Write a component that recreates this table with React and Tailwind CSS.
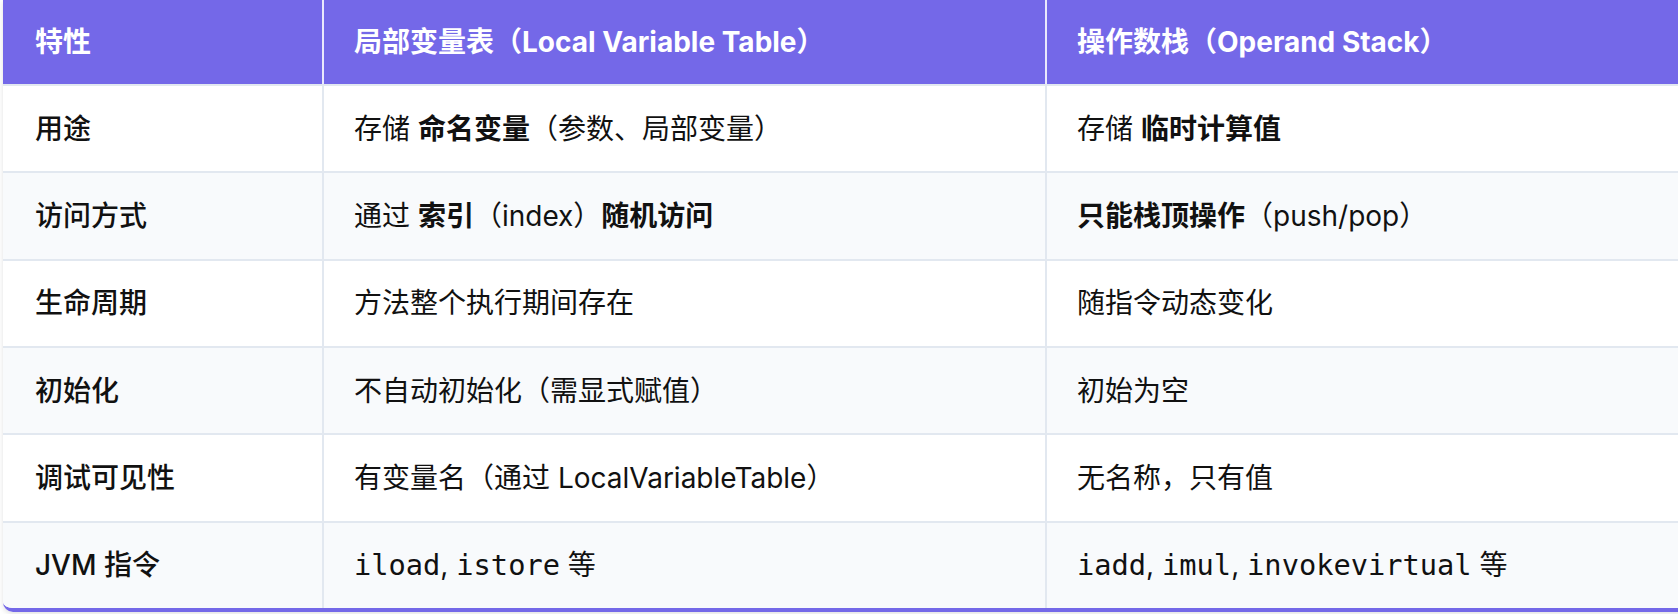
const rows = [
  {
    name: '用途',
    local: (
      <>
        存储 <b className="font-bold">命名变量</b>（参数、局部变量）
      </>
    ),
    stack: (
      <>
        存储 <b className="font-bold">临时计算值</b>
      </>
    ),
  },
  {
    name: '访问方式',
    local: (
      <>
        通过 <b className="font-bold">索引</b>（index）<b className="font-bold">随机访问</b>
      </>
    ),
    stack: (
      <>
        <b className="font-bold">只能栈顶操作</b>（push/pop）
      </>
    ),
  },
  { name: '生命周期', local: '方法整个执行期间存在', stack: '随指令动态变化' },
  { name: '初始化', local: '不自动初始化（需显式赋值）', stack: '初始为空' },
  { name: '调试可见性', local: '有变量名（通过 LocalVariableTable）', stack: '无名称，只有值' },
  {
    name: 'JVM 指令',
    local: (
      <>
        <Code>iload</Code>, <Code>istore</Code> 等
      </>
    ),
    stack: (
      <>
        <Code>iadd</Code>, <Code>imul</Code>, <Code>invokevirtual</Code> 等
      </>
    ),
  },
];

function Code({ children }) {
  return <code className="font-['DejaVu_Sans_Mono',monospace] text-[28.7px]">{children}</code>;
}

const App = () => {
  return (
    <div className="w-full h-[614px] overflow-hidden bg-white pl-[3px] font-['Inter','Noto_Sans_CJK_SC',sans-serif] text-[28px]">
      <div className="w-[1720px] rounded-b-[10px] overflow-hidden border-b-4 border-[#7468e8] shadow-[0_2px_5px_rgba(0,0,0,0.12)]">
        {/* header */}
        <div className="flex h-[84px] bg-[#7468e8] text-white font-bold">
          <div className="w-[319px] flex items-center pl-[32px]">特性</div>
          <div className="w-[723px] flex items-center pl-[30px] border-l-2 border-white/85">
            局部变量表（Local Variable Table）
          </div>
          <div className="flex-1 flex items-center pl-[30px] border-l-2 border-white/85">
            操作数栈（Operand Stack）
          </div>
        </div>

        {rows.map((row, i) => (
          <div
            key={row.name}
            className={`flex h-[87.33px] border-t-2 border-[#e2e8f0] text-[#111] ${
              i % 2 === 1 ? 'bg-[#f8fafc]' : 'bg-white'
            }`}
          >
            <div className="w-[319px] flex items-center pl-[32px] font-medium">{row.name}</div>
            <div className="w-[723px] flex items-center pl-[30px] border-l-2 border-[#e2e8f0]">
              <span>{row.local}</span>
            </div>
            <div className="flex-1 flex items-center pl-[30px] border-l-2 border-[#e2e8f0]">
              <span>{row.stack}</span>
            </div>
          </div>
        ))}
      </div>
    </div>
  );
};

export default App;
